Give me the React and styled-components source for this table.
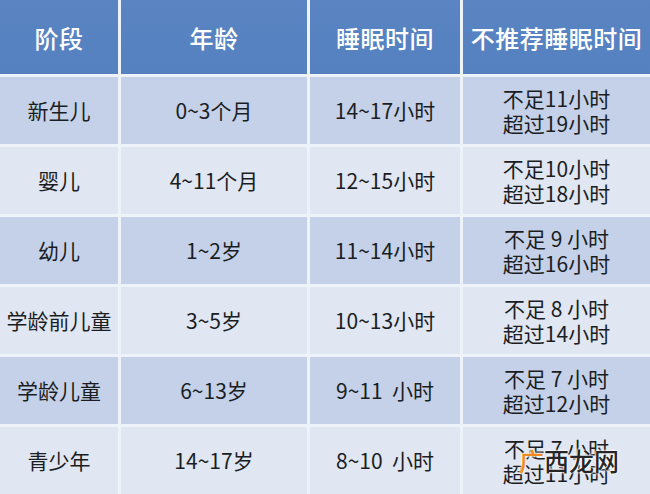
import styled, { createGlobalStyle } from 'styled-components';

const GlobalStyle = createGlobalStyle`
  html, body {
    margin: 0;
    padding: 0;
    background: #f3f6fb;
  }
  body {
    font-family: "Noto Sans CJK SC", "Noto Sans", sans-serif;
  }
`;

const Frame = styled.div`
  position: relative;
  width: 650px;
  height: 494px;
  overflow: hidden;
  background: #eef2f9;
`;

const Grid = styled.div`
  display: grid;
  grid-template-columns: 118px 186px 150px 187px;
  grid-template-rows: 74px repeat(6, 67px);
  gap: 3px;
  background: #eef2f9;
`;

const HeadCell = styled.div`
  display: flex;
  align-items: center;
  justify-content: center;
  background: linear-gradient(#5a84c2, #5581c0);
  color: #fff;
  font-size: 24px;
  font-weight: 500;
  letter-spacing: 0.5px;
  white-space: nowrap;
`;

const Cell = styled.div`
  display: flex;
  flex-direction: column;
  align-items: center;
  justify-content: center;
  background: ${(p) => (p.$odd ? '#c4d1e9' : '#e0e6f2')};
  color: #1a1d22;
  font-size: 21px;
  line-height: 25px;
  white-space: pre;
`;

const Watermark = styled.div`
  position: absolute;
  left: 519px;
  top: 444px;
  font-size: 25px;
  font-weight: 500;
  line-height: 32px;
  font-family: "Noto Sans CJK SC", sans-serif;
  color: #262626;
  text-shadow: 0 0 2px #fff, 0 0 2px #fff, 0 0 3px #fff;
`;

const Accent = styled.span`
  color: #f08a1c;
`;

const headers = ['阶段', '年龄', '睡眠时间', '不推荐睡眠时间'];

const rows = [
  ['新生儿', '0~3个月', '14~17小时', ['不足11小时', '超过19小时']],
  ['婴儿', '4~11个月', '12~15小时', ['不足10小时', '超过18小时']],
  ['幼儿', '1~2岁', '11~14小时', ['不足 9 小时', '超过16小时']],
  ['学龄前儿童', '3~5岁', '10~13小时', ['不足 8 小时', '超过14小时']],
  ['学龄儿童', '6~13岁', '9~11  小时', ['不足 7 小时', '超过12小时']],
  ['青少年', '14~17岁', '8~10  小时', ['不足 7 小时', '超过11小时']],
];

export default function App() {
  return (
    <Frame>
      <GlobalStyle />
      <Grid>
        {headers.map((h) => (
          <HeadCell key={h}>{h}</HeadCell>
        ))}
        {rows.map((r, i) =>
          r.map((c, j) => (
            <Cell key={`${i}-${j}`} $odd={i % 2 === 0}>
              {Array.isArray(c) ? c.map((line) => <div key={line}>{line}</div>) : c}
            </Cell>
          ))
        )}
      </Grid>
      <Watermark>
        <Accent>广</Accent>西龙网
      </Watermark>
    </Frame>
  );
}
